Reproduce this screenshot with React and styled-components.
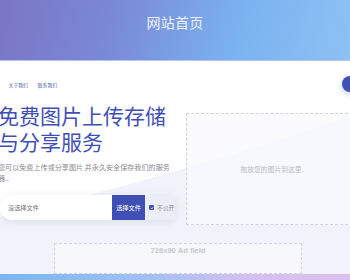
import React from 'react'
import styled, { createGlobalStyle } from 'styled-components'

const GlobalStyle = createGlobalStyle`
    html, body {
        margin: 0;
        padding: 0;
        overflow: hidden;
        background: #fff;
        font-family: "Noto Sans CJK SC", "Noto Sans", sans-serif;
    }
`;

const Header = styled.header`
    height: 61px;
    border-bottom: 1px solid #b4c4f1;
    background: linear-gradient(105deg, #7b75c5 0%, #7a8ad6 33%, #7ab3f0 68%, #8ec1f4 100%);
    display: flex;
    justify-content: center;
    padding-top: 13px;
    box-sizing: border-box;

    h1 {
        margin: 0;
        font-size: 14px;
        line-height: 18px;
        font-weight: 400;
        color: #eef0fb;
        letter-spacing: 0.02em;
    }
`;

const Main = styled.main`
    position: relative;
    height: 213px;
`;

const Wave = styled.svg`
    position: absolute;
    inset: 0;
    width: 100%;
    height: 100%;
    z-index: 0;
`;

const Container = styled.div`
    position: relative;
    z-index: 1;
    width: 360px;
    margin-left: -2px;
`;

const Nav = styled.nav`
    display: flex;
    align-items: center;
    justify-content: space-between;
    padding-top: 15px;
    height: 16px;

    ul {
        display: flex;
        gap: 10px;
        margin: 0 0 0 -9px;
        padding: 0;
        list-style: none;
    }

    li {
        font-size: 4.8px;
        color: #4b56a6;
    }
`;

const Avatar = styled.div`
    width: 16px;
    height: 16px;
    border-radius: 50%;
    background: #3f51b5;
    box-shadow: 0 2px 6px rgba(63, 81, 181, 0.3);
`;

const Hero = styled.section`
    display: flex;
    align-items: flex-start;
    gap: 10px;
    margin-top: 10px;
`;

const Intro = styled.div`
    width: 178px;
    flex-shrink: 0;

    h2 {
        margin: 0;
        font-size: 21px;
        line-height: 26px;
        font-weight: 400;
        color: #3f4fb6;
    }

    p {
        margin: 8px 0 0;
        font-size: 7.1px;
        line-height: 10.5px;
        color: #8a8a90;
    }
`;

const Upload = styled.div`
    display: flex;
    height: 25px;
    margin-top: 12px;
    margin-left: 2px;
    width: 175px;
    border-radius: 13px 4px 4px 13px;
    box-shadow: 0 2px 8px rgba(60, 70, 120, 0.12);
`;

const FileField = styled.div`
    flex: 1;
    display: flex;
    align-items: center;
    padding-left: 8px;
    background: #fff;
    border-radius: 13px 0 0 13px;
    font-size: 6.2px;
    color: #777;
`;

const PickButton = styled.button`
    width: 33px;
    border: 0;
    padding: 0;
    background: #3f4fb3;
    color: #fff;
    font-family: inherit;
    font-size: 6.2px;
`;

const Private = styled.label`
    width: 30px;
    display: flex;
    align-items: center;
    gap: 3px;
    padding-left: 4px;
    box-sizing: border-box;
    background: #eceef5;
    border-radius: 0 4px 4px 0;
    font-size: 5.8px;
    color: #888;
`;

const Check = styled.span`
    width: 5px;
    height: 5px;
    border-radius: 1px;
    background: #3f4fb3;
    display: flex;
    align-items: center;
    justify-content: center;
`;

const DropZone = styled.div`
    margin-top: 11px;
    width: 172px;
    height: 112px;
    box-sizing: border-box;
    border: 1px dashed #d2d3da;
    background: rgba(250, 250, 253, 0.7);
    display: flex;
    align-items: center;
    justify-content: center;
    font-size: 6.8px;
    color: #b8b9c2;
`;

const AdField = styled.div`
    width: 248px;
    height: 31px;
    margin: 18px auto 0;
    box-sizing: border-box;
    border: 1px dashed #d2d3da;
    background: rgba(250, 250, 253, 0.6);
    text-align: center;
    padding-top: 2px;
    font-family: "Liberation Sans", Arial, sans-serif;
    font-size: 7.6px;
    font-weight: 700;
    color: #c6c7cc;
`;

const Footer = styled.footer`
    height: 6px;
    background: linear-gradient(90deg, #78b5f2 0%, #a2c0f2 42%, #d4c0f0 70%, #dcbff0 100%);
`;

function App() {
    return (
        <>
            <GlobalStyle />
            <Header>
                <h1>网站首页</h1>
            </Header>
            <Main>
                <Wave viewBox="0 0 350 213" preserveAspectRatio="none">
                    <path d="M0,156 C80,138 200,105 350,56 L350,213 L0,213 Z" fill="#f2f3fa" />
                </Wave>
                <Container>
                    <Nav>
                        <ul>
                            <li>首页</li>
                            <li>关于我们</li>
                            <li>联系我们</li>
                        </ul>
                        <Avatar />
                    </Nav>
                    <Hero>
                        <Intro>
                            <h2>免费图片上传存储与分享服务</h2>
                            <p>您可以免费上传或分享图片 并永久安全保存我们的服务器..</p>
                            <Upload>
                                <FileField>没选择文件</FileField>
                                <PickButton>选择文件</PickButton>
                                <Private>
                                    <Check>
                                        <svg width="4" height="4" viewBox="0 0 10 10">
                                            <path d="M2 5.2 L4.2 7.4 L8.2 2.8" stroke="#fff" strokeWidth="1.8" fill="none" />
                                        </svg>
                                    </Check>
                                    不公开
                                </Private>
                            </Upload>
                        </Intro>
                        <DropZone>拖放您的图片到这里.</DropZone>
                    </Hero>
                    <AdField>728x90 Ad field</AdField>
                </Container>
            </Main>
            <Footer />
        </>
    )
}

export default App
